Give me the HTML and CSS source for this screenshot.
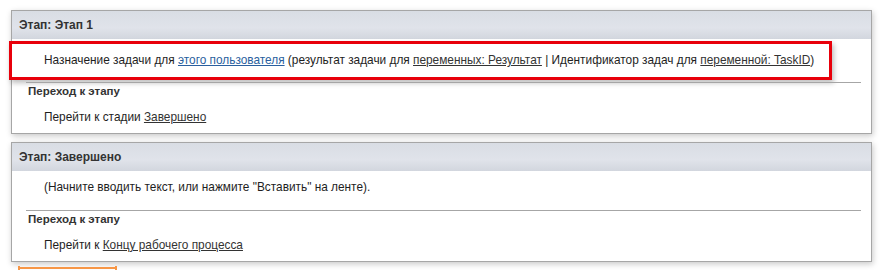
FILE: index.html
```html
<!DOCTYPE html>
<html lang="ru">
<head>
  <meta charset="UTF-8">
  <title>Этапы рабочего процесса</title>
  <link rel="stylesheet" href="styles.css">
</head>
<body>

  <div class="stage">
    <div class="stage-header">Этап: Этап 1</div>
    <div class="action selected">
      Назначение задачи для <a href="#" class="link-blue">этого пользователя</a>
      (результат задачи для <a href="#">переменных: Результат</a> | Идентификатор задач для <a href="#">переменной: TaskID</a>)
    </div>
    <div class="separator"></div>
    <div class="transition-title">Переход к этапу</div>
    <div class="transition">Перейти к стадии <a href="#">Завершено</a></div>
  </div>

  <div class="stage">
    <div class="stage-header">Этап: Завершено</div>
    <div class="action placeholder">(Начните вводить текст, или нажмите "Вставить" на ленте).</div>
    <div class="separator"></div>
    <div class="transition-title">Переход к этапу</div>
    <div class="transition">Перейти к <a href="#">Концу рабочего процесса</a></div>
  </div>

  <div class="drop-line"></div>

</body>
</html>
```

FILE: styles.css
```css
body {
  margin: 0;
  padding: 10px 0 0 11px;
  background: #fff;
  font-family: "Liberation Sans", Arial, sans-serif;
  font-size: 11.85px;
  color: #1e1e1e;
}

a {
  color: #333;
  text-decoration: underline;
}

a.link-blue {
  color: #2a5f9e;
}

.stage {
  width: 861px;
  box-sizing: border-box;
  border: 1px solid #a6a6a6;
  background: #fff;
  box-shadow: 1px 2px 6px rgba(0, 0, 0, 0.22);
  padding-bottom: 6px;
  margin-bottom: 8px;
}

.stage-header {
  height: 28px;
  line-height: 28px;
  padding-left: 7px;
  font-size: 12px;
  font-weight: bold;
  color: #333;
  background: linear-gradient(#d9dde4, #e0e3ea 60%, #d2d6de);
}

.action {
  padding-left: 32px;
  white-space: nowrap;
}

.action.selected {
  margin: 2px 0 0 -3px;
  width: 823px;
  height: 39px;
  box-sizing: border-box;
  border: 3px solid #e8000b;
  padding-left: 32px;
  line-height: 33px;
  box-shadow: 2px 3px 5px rgba(0, 0, 0, 0.25);
}

.action.placeholder {
  padding-top: 6px;
  line-height: 20px;
}

.separator {
  height: 1px;
  background: #a6a6a6;
  margin: 2px 10px 0 14px;
}

.action.placeholder + .separator {
  margin-top: 13px;
}

.transition-title {
  padding-left: 16px;
  line-height: 17px;
  font-size: 11.5px;
  font-weight: bold;
  color: #333;
}

.transition {
  margin-top: 7px;
  padding-left: 32px;
  line-height: 20px;
}

.drop-line {
  margin: -4px 0 0 7px;
  width: 99px;
  height: 4px;
  box-sizing: border-box;
  border-left: 2px solid #f79646;
  border-right: 2px solid #f79646;
  background: linear-gradient(#f79646, #f79646) center / 100% 2px no-repeat;
}
```
